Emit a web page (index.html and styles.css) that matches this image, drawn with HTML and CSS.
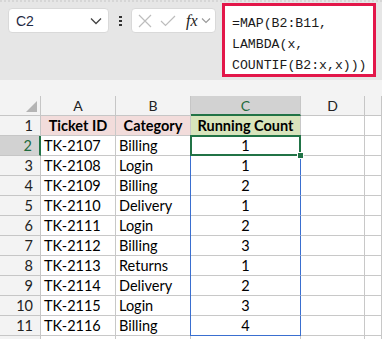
FILE: index.html
```html
<!DOCTYPE html>
<html lang="en">
<head>
  <meta charset="UTF-8">
  <title>Running Count</title>
  <link rel="stylesheet" href="styles.css">
</head>
<body>
  <div class="formula-bar">
    <div class="name-box">
      <span class="name-text">C2</span>
      <svg class="chevron" width="12" height="8" viewBox="0 0 12 8"><path d="M1 1.5 L6 6.5 L11 1.5" fill="none" stroke="#444" stroke-width="1.3"/></svg>
    </div>
    <div class="grip"><span></span><span></span><span></span></div>
    <div class="fn-box">
      <svg width="14" height="14" viewBox="0 0 14 14"><path d="M1 1 L13 13 M13 1 L1 13" stroke="#bdbdbd" stroke-width="1.2"/></svg>
      <svg width="16" height="12" viewBox="0 0 16 12"><path d="M1 6 L5.5 10.5 L15 1" fill="none" stroke="#bdbdbd" stroke-width="1.2"/></svg>
      <span class="fx">fx</span>
      <svg width="10" height="7" viewBox="0 0 10 7"><path d="M1 1.5 L5 5.5 L9 1.5" fill="none" stroke="#999" stroke-width="1.1"/></svg>
    </div>
    <div class="formula">=MAP(B2:B11,<br>LAMBDA(x,<br>COUNTIF(B2:x,x)))</div>
  </div>

  <div class="strip"></div>

  <div class="sheet">
    <div class="hd corner"><span class="tri"></span></div>
    <div class="hd">A</div>
    <div class="hd">B</div>
    <div class="hd hd-active">C</div>
    <div class="hd">D</div>
    <div class="hd"></div>

    <div class="rh">1</div>
    <div class="c title pink">Ticket ID</div>
    <div class="c title pink">Category</div>
    <div class="c title green">Running Count</div>
    <div class="c"></div>
    <div class="c"></div>

    <div class="rh rh-active">2</div>
    <div class="c">TK-2107</div>
    <div class="c">Billing</div>
    <div class="c num spill active">1</div>
    <div class="c"></div>
    <div class="c"></div>

    <div class="rh">3</div>
    <div class="c">TK-2108</div>
    <div class="c">Login</div>
    <div class="c num spill">1</div>
    <div class="c"></div>
    <div class="c"></div>

    <div class="rh">4</div>
    <div class="c">TK-2109</div>
    <div class="c">Billing</div>
    <div class="c num spill">2</div>
    <div class="c"></div>
    <div class="c"></div>

    <div class="rh">5</div>
    <div class="c">TK-2110</div>
    <div class="c">Delivery</div>
    <div class="c num spill">1</div>
    <div class="c"></div>
    <div class="c"></div>

    <div class="rh">6</div>
    <div class="c">TK-2111</div>
    <div class="c">Login</div>
    <div class="c num spill">2</div>
    <div class="c"></div>
    <div class="c"></div>

    <div class="rh">7</div>
    <div class="c">TK-2112</div>
    <div class="c">Billing</div>
    <div class="c num spill">3</div>
    <div class="c"></div>
    <div class="c"></div>

    <div class="rh">8</div>
    <div class="c">TK-2113</div>
    <div class="c">Returns</div>
    <div class="c num spill">1</div>
    <div class="c"></div>
    <div class="c"></div>

    <div class="rh">9</div>
    <div class="c">TK-2114</div>
    <div class="c">Delivery</div>
    <div class="c num spill">2</div>
    <div class="c"></div>
    <div class="c"></div>

    <div class="rh">10</div>
    <div class="c">TK-2115</div>
    <div class="c">Login</div>
    <div class="c num spill">3</div>
    <div class="c"></div>
    <div class="c"></div>

    <div class="rh">11</div>
    <div class="c">TK-2116</div>
    <div class="c">Billing</div>
    <div class="c num spill spill-end">4</div>
    <div class="c"></div>
    <div class="c"></div>

    <div class="rh"></div>
    <div class="c"></div>
    <div class="c"></div>
    <div class="c"></div>
    <div class="c"></div>
    <div class="c"></div>
  </div>
</body>
</html>
```

FILE: styles.css
```css
html {
  overflow: hidden;
}

body {
  margin: 0;
  width: 382px;
  height: 339px;
  overflow: hidden;
  background: #ffffff;
  font-family: Lato, "Open Sans", sans-serif;
  color: #000;
}

.formula-bar {
  height: 80px;
  background: #e6e6e6;
  border-top: 2px dotted #d6d6d6;
  box-sizing: border-box;
  display: flex;
  align-items: flex-start;
}

.name-box {
  margin: 6px 0 0 8px;
  width: 101px;
  height: 25px;
  box-sizing: border-box;
  background: #fff;
  border: 1px solid #d9d9d9;
  border-radius: 4px;
  display: flex;
  align-items: center;
  justify-content: space-between;
  padding: 0 6px 0 7px;
}

.name-text {
  font-family: "Liberation Sans", sans-serif;
  font-size: 14px;
  color: #1f2a44;
}

.grip {
  width: 22px;
  height: 25px;
  margin-top: 6px;
  display: flex;
  flex-direction: column;
  align-items: center;
  justify-content: center;
  gap: 2px;
  padding-left: 1px;
  box-sizing: border-box;
}

.grip span {
  width: 3px;
  height: 2px;
  background: #333;
}

.fn-box {
  margin-top: 6px;
  width: 85px;
  height: 25px;
  box-sizing: border-box;
  background: #fff;
  border: 1px solid #d9d9d9;
  border-radius: 4px;
  display: flex;
  align-items: center;
  padding: 0 4px 0 6px;
  gap: 8px;
}

.fx {
  font-family: "Liberation Serif", serif;
  font-style: italic;
  font-size: 16px;
  color: #222;
  margin-left: 2px;
  margin-right: -5px;
}

.formula {
  margin: 1px 0 0 6px;
  width: 154px;
  height: 74px;
  box-sizing: border-box;
  background: #fff;
  border: 3px solid #e3174a;
  padding: 7px 0 0 7px;
  font-family: "Liberation Mono", monospace;
  font-size: 13.2px;
  line-height: 21px;
  color: #1a1a1a;
  white-space: nowrap;
}

.strip {
  height: 16px;
  background: #f3f3f3;
}

.sheet {
  display: grid;
  grid-template-columns: 41px 75px 75px 110px 64px 1fr;
  grid-auto-rows: 20px;
  font-size: 14.5px;
}

.sheet > div {
  box-sizing: border-box;
  border-right: 1px solid #c8c8c8;
  border-bottom: 1px solid #c8c8c8;
  display: flex;
  align-items: center;
  white-space: nowrap;
}

.hd {
  background: #f3f3f3;
  justify-content: center;
  font-size: 14px;
  color: #222;
  border-color: #c6c6c6 !important;
}

.corner {
  position: relative;
}

.tri {
  position: absolute;
  right: 3px;
  bottom: 3px;
  width: 0;
  height: 0;
  border-left: 11px solid transparent;
  border-bottom: 11px solid #b4b4b4;
}

.hd-active {
  background: #d2d2d2;
  color: #1e6b3d;
  border-bottom: 2px solid #217346 !important;
}

.rh {
  background: #f3f3f3;
  justify-content: flex-end;
  padding-right: 7px;
  font-size: 14.5px;
  color: #222;
  border-color: #c6c6c6 !important;
}

.rh-active {
  background: #d2d2d2;
  color: #1e6b3d;
  border-right: 2px solid #217346 !important;
}

.c {
  padding-left: 3px;
  background: #fff;
}

.title {
  font-weight: 700;
  justify-content: center;
  padding-left: 0;
}

.pink {
  background: #f2dcdb;
}

.green {
  background: #d8e4bc;
}

.num {
  justify-content: center;
  padding-left: 0;
}

.spill {
  border-right-color: #3a6fd0 !important;
  box-shadow: -1px 0 0 #3a6fd0;
}

.spill-end {
  border-bottom-color: #3a6fd0 !important;
}

.active {
  position: relative;
}

.active::after {
  content: "";
  position: absolute;
  left: -1px;
  top: -1px;
  right: -1px;
  bottom: -1px;
  border: 2px solid #217346;
}

.active::before {
  content: "";
  position: absolute;
  right: -4px;
  bottom: -4px;
  width: 5px;
  height: 5px;
  background: #217346;
  border: 1px solid #fff;
  z-index: 1;
}
```
